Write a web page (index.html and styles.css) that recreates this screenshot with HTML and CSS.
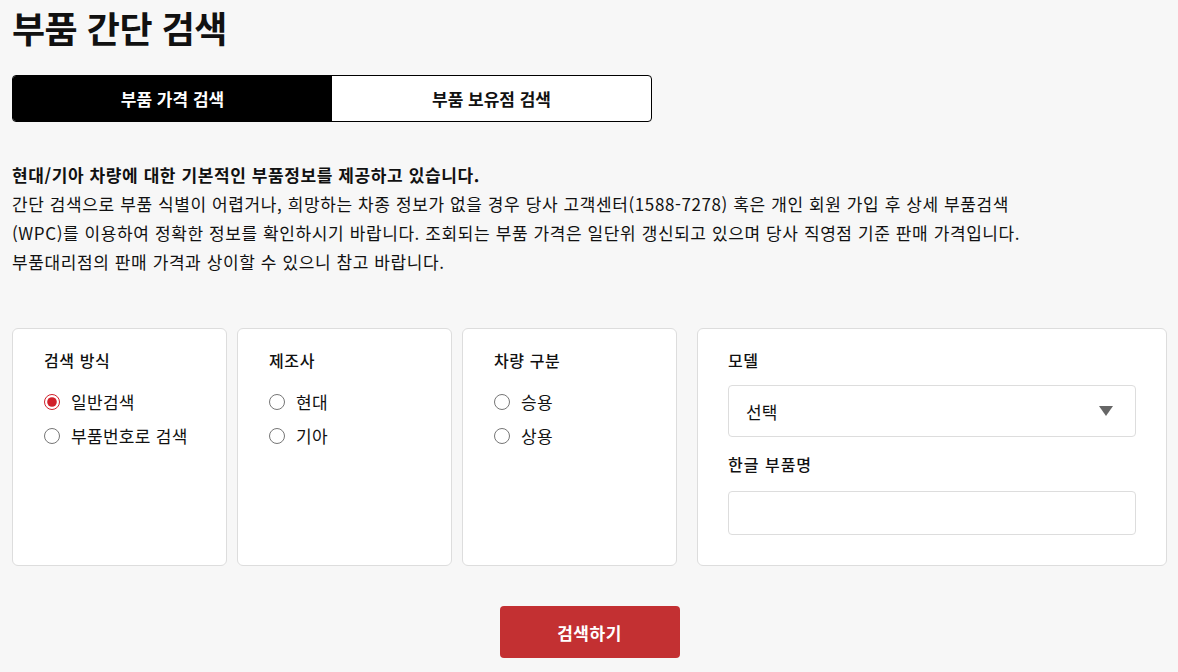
FILE: index.html
```html
<!DOCTYPE html>
<html lang="ko">
  <head>
    <meta charset="UTF-8">
    <meta name="viewport" content="width=device-width, initial-scale=1.0">
    <title>부품 간단 검색</title>
    <link rel="stylesheet" href="styles.css">
  </head>
  <body>
    <div class="page">
      <h1 class="title">부품 간단 검색</h1>

      <div class="tabs">
        <a href="#" class="tab active">부품 가격 검색</a>
        <a href="#" class="tab">부품 보유점 검색</a>
      </div>

      <div class="notice">
        <p class="notice-head">현대/기아 차량에 대한 기본적인 부품정보를 제공하고 있습니다.</p>
        <p>간단 검색으로 부품 식별이 어렵거나, 희망하는 차종 정보가 없을 경우 당사 고객센터(1588-7278) 혹은 개인 회원 가입 후 상세 부품검색<br>(WPC)를 이용하여 정확한 정보를 확인하시기 바랍니다. 조회되는 부품 가격은 일단위 갱신되고 있으며 당사 직영점 기준 판매 가격입니다.<br>부품대리점의 판매 가격과 상이할 수 있으니 참고 바랍니다.</p>
      </div>

      <form class="search">
        <div class="cards">
          <div class="card">
            <div class="card-label">검색 방식</div>
            <label class="radio"><input type="radio" name="type" checked><span>일반검색</span></label>
            <label class="radio"><input type="radio" name="type"><span>부품번호로 검색</span></label>
          </div>
          <div class="card">
            <div class="card-label">제조사</div>
            <label class="radio"><input type="radio" name="maker"><span>현대</span></label>
            <label class="radio"><input type="radio" name="maker"><span>기아</span></label>
          </div>
          <div class="card">
            <div class="card-label">차량 구분</div>
            <label class="radio"><input type="radio" name="car"><span>승용</span></label>
            <label class="radio"><input type="radio" name="car"><span>상용</span></label>
          </div>
          <div class="card card-wide">
            <div class="card-label">모델</div>
            <div class="select">
              <span>선택</span>
              <svg width="14" height="10" viewBox="0 0 14 10"><path d="M0 0 H14 L7 10 Z" fill="#666"/></svg>
            </div>
            <div class="card-label second">한글 부품명</div>
            <input type="text" class="text-input">
          </div>
        </div>
        <div class="actions">
          <button type="button" class="btn-search">검색하기</button>
        </div>
      </form>
    </div>
  </body>
</html>
```
FILE: styles.css
```css
html {
  font-family: "Noto Sans CJK KR", "Noto Sans", sans-serif;
}

body {
  margin: 0;
  background-color: #f7f7f7;
  color: #111;
}

.page {
  width: 1155px;
  padding: 0 0 0 12px;
}

.title {
  font-size: 36px;
  font-weight: 700;
  line-height: 52px;
  margin: 0;
  padding-top: 1px;
  letter-spacing: -0.5px;
}

.tabs {
  display: flex;
  width: 638px;
  height: 45px;
  margin-top: 22px;
  border: 1px solid #000;
  border-radius: 4px;
  overflow: hidden;
  background: #fff;
}

.tab {
  flex: 1;
  display: flex;
  align-items: center;
  justify-content: center;
  font-size: 17px;
  font-weight: 700;
  color: #111;
  text-decoration: none;
}

.tab.active {
  background: #000;
  color: #fff;
}

.notice {
  margin-top: 38px;
  font-size: 17px;
  line-height: 29px;
  letter-spacing: 0.6px;
}

.notice p {
  margin: 0;
}

.notice-head {
  font-weight: 700;
  letter-spacing: 0.6px;
}

.search {
  margin-top: 52px;
}

.cards {
  display: flex;
  gap: 10px;
}

.card {
  box-sizing: border-box;
  width: 215px;
  height: 238px;
  padding: 18px 31px;
  background: #fff;
  border: 1px solid #ddd;
  border-radius: 6px;
}

.card-wide {
  width: 470px;
  margin-left: 10px;
  padding: 18px 30px;
}

.card-label {
  font-size: 16px;
  font-weight: 500;
  line-height: 26px;
  letter-spacing: 0.6px;
  margin-bottom: 12px;
}

.card-label.second {
  margin-top: 14px;
  margin-bottom: 14px;
  letter-spacing: 1px;
}

.radio {
  display: flex;
  align-items: center;
  font-size: 17px;
  letter-spacing: 0.3px;
  line-height: 24px;
  height: 34px;
}

.radio input {
  width: 16px;
  height: 16px;
  margin: 0 11px 0 0;
  accent-color: #d0202a;
}

.select {
  box-sizing: border-box;
  height: 52px;
  border: 1px solid #ddd;
  border-radius: 4px;
  display: flex;
  align-items: center;
  justify-content: space-between;
  padding: 0 22px 0 17px;
  font-size: 17px;
}

.text-input {
  display: block;
  box-sizing: border-box;
  width: 100%;
  height: 44px;
  border: 1px solid #ddd;
  border-radius: 4px;
  margin: 0;
}

.actions {
  display: flex;
  justify-content: center;
  margin-top: 40px;
}

.btn-search {
  width: 180px;
  height: 52px;
  border: none;
  border-radius: 4px;
  background: #c33032;
  color: #fff;
  font-family: inherit;
  font-size: 17px;
  letter-spacing: 0.5px;
  font-weight: 700;
}
```
